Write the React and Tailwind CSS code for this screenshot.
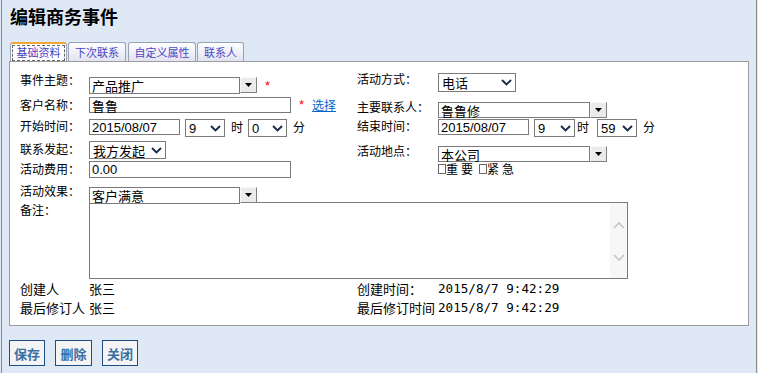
import React from "react";

const CJK = "font-['Noto_Sans_CJK_SC',sans-serif]";
const LAT = "font-['Liberation_Sans','Noto_Sans_CJK_SC',sans-serif]";
const MONO = "font-['DejaVu_Sans_Mono',monospace]";

function Chevron() {
  return (
    <svg width="11" height="7" viewBox="0 0 11 7">
      <polyline points="1,1 5.5,5.5 10,1" fill="none" stroke="#1b2a48" strokeWidth="1.9" />
    </svg>
  );
}

function Select({ className, text, font }) {
  return (
    <div
      className={`${className} ${font} border border-[#7a7a7a] bg-white flex items-center justify-between pl-[3px] pr-[3px] text-[13px] leading-[13px] text-black`}
    >
      <span>{text}</span>
      <Chevron />
    </div>
  );
}

function Input({ className, text, font }) {
  return (
    <div
      className={`${className} ${font} border border-[#7a7a7a] bg-white flex items-center pl-[2px] text-[13px] leading-[13px] text-black whitespace-nowrap`}
    >
      {text}
    </div>
  );
}

function DropBtn() {
  return (
    <div className="w-[17px] h-[16px] bg-[#ebebeb] border-t border-l border-t-[#f8f8f8] border-l-[#f8f8f8] border-r border-b border-r-[#808080] border-b-[#808080] flex items-center justify-center">
      <svg width="7" height="4" viewBox="0 0 7 4">
        <polygon points="0,0 7,0 3.5,4" fill="#000" />
      </svg>
    </div>
  );
}

function Combo({ inputClass, text }) {
  return (
    <div className="flex items-start">
      <Input className={inputClass} text={text} font={CJK} />
      <DropBtn />
    </div>
  );
}

function Label({ children, className = "" }) {
  return (
    <div className={`${className} text-[12px] leading-[12px] text-black whitespace-nowrap`}>{children}</div>
  );
}

function Star({ className = "" }) {
  return <span className={`${className} ${LAT} text-[13px] leading-[13px] text-[#ff0000]`}>*</span>;
}

function Check() {
  return <div className="w-[8px] h-[10px] border border-[#6a6a6a] bg-white" />;
}

export default function App() {
  return (
    <div className={`w-[758px] h-[373px] bg-[#dfe9f5] overflow-hidden ${CJK}`}>
      <div className="ml-[1px] w-[756px] h-full border-x border-[#8a8a8a]">
        {/* title */}
        <div className="pt-[7px] pl-[8px] text-[18px] leading-[18px] font-bold text-black">编辑商务事件</div>

        {/* tabs */}
        <div className="mt-[17px] pl-[8px] flex items-end h-[19px] text-[11px] leading-[11px]">
          <div className="w-[57px] h-[19px] border-t-2 border-t-[#f0a830] border-x border-x-[#9aa3b5] rounded-t-[3px] bg-white px-[1px] pt-[1px] flex">
            <div className="flex-1 border border-dashed border-[#666] flex justify-center pt-[1px] text-[#4a3fc0]">
              基础资料
            </div>
          </div>
          <div className="ml-[1px] w-[58px] h-[19px] border border-b-0 border-[#9aa3b5] rounded-t-[3px] bg-linear-to-b from-white to-[#e2e2f2] flex justify-center pt-[4px] text-[#4848c4]">
            下次联系
          </div>
          <div className="ml-[2px] w-[68px] h-[19px] border border-b-0 border-[#9aa3b5] rounded-t-[3px] bg-linear-to-b from-white to-[#e2e2f2] flex justify-center pt-[4px] text-[#4848c4]">
            自定义属性
          </div>
          <div className="ml-[1px] w-[47px] h-[19px] border border-b-0 border-[#9aa3b5] rounded-t-[3px] bg-linear-to-b from-white to-[#e2e2f2] flex justify-center pt-[4px] text-[#4848c4]">
            联系人
          </div>
        </div>

        {/* panel */}
        <div className="ml-[7px] w-[740px] h-[265px] border border-[#9c9c9c] bg-white pl-[10px] pt-[11px]">
          {/* row 1 */}
          <div className="flex h-[24px]">
            <Label className="w-[69px] pt-[1px]">事件主题：</Label>
            <div className="w-[268px] pt-[4px] flex items-start">
              <Combo inputClass="w-[151px] h-[17px]" text="产品推广" />
              <Star className="ml-[8px] mt-[2px]" />
            </div>
            <Label className="w-[81px] pt-[0px]">活动方式：</Label>
            <div className="pt-[0px]">
              <Select className="w-[78px] h-[19px]" text="电话" font={CJK} />
            </div>
          </div>

          {/* row 2 */}
          <div className="flex h-[22px]">
            <Label className="w-[69px] pt-[2px]">客户名称：</Label>
            <div className="w-[268px] flex items-start">
              <Input className="w-[202px] h-[16px]" text="鲁鲁" font={CJK} />
              <Star className="ml-[8px] mt-[1px]" />
              <span className="ml-[8px] mt-[2px] text-[12px] leading-[12px] text-[#0066cc] underline">选择</span>
            </div>
            <Label className="w-[81px] pt-[4px]">主要联系人：</Label>
            <div className="pt-[5px]">
              <Combo inputClass="w-[152px] h-[16px]" text="鲁鲁修" />
            </div>
          </div>

          {/* row 3 */}
          <div className="flex h-[21px]">
            <Label className="w-[69px] pt-[1px]">开始时间：</Label>
            <div className="w-[268px] flex items-start">
              <Input className="w-[91px] h-[16px]" text="2015/08/07" font={LAT} />
              <Select className="ml-[5px] w-[40px] h-[18px]" text="9" font={LAT} />
              <span className="ml-[6px] mt-[2px] text-[12px] leading-[12px]">时</span>
              <Select className="ml-[5px] w-[39px] h-[18px]" text="0" font={LAT} />
              <span className="ml-[6px] mt-[2px] text-[12px] leading-[12px]">分</span>
            </div>
            <Label className="w-[81px] pt-[1px]">结束时间：</Label>
            <div className="flex items-start">
              <Input className="w-[91px] h-[16px]" text="2015/08/07" font={LAT} />
              <Select className="ml-[5px] w-[41px] h-[18px]" text="9" font={LAT} />
              <span className="ml-[2px] mt-[2px] text-[12px] leading-[12px]">时</span>
              <Select className="ml-[8px] w-[40px] h-[18px]" text="59" font={LAT} />
              <span className="ml-[6px] mt-[2px] text-[12px] leading-[12px]">分</span>
            </div>
          </div>

          {/* row 4 */}
          <div className="flex h-[20px]">
            <Label className="w-[69px] pt-[3px]">联系发起：</Label>
            <div className="w-[268px] pt-[1px]">
              <Select className="w-[77px] h-[18px]" text="我方发起" font={CJK} />
            </div>
            <Label className="w-[81px] pt-[5px]">活动地点：</Label>
            <div className="pt-[6px] flex flex-col">
              <Combo inputClass="w-[152px] h-[16px]" text="本公司" />
              <div className="mt-[1px] flex items-center h-[12px] text-[12px] leading-[12px]">
                <Check />
                <span className="tracking-[3px]">重要</span>
                <div className="ml-[3px]">
                  <Check />
                </div>
                <span className="tracking-[3px]">紧急</span>
              </div>
            </div>
          </div>

          {/* row 5 */}
          <div className="flex h-[25px]">
            <Label className="w-[69px] pt-[3px]">活动费用：</Label>
            <div className="w-[268px] pt-[1px]">
              <Input className="w-[202px] h-[17px]" text="0.00" font={LAT} />
            </div>
          </div>

          {/* row 6 */}
          <div className="flex h-[17px]">
            <Label className="w-[69px] pt-[0px]">活动效果：</Label>
            <div className="w-[268px] pt-[2px] relative z-10">
              <Combo inputClass="w-[151px] h-[17px]" text="客户满意" />
            </div>
          </div>

          {/* row 7 */}
          <div className="flex h-[78px]">
            <Label className="w-[69px] pt-[2px]">备注：</Label>
            <div className="w-[539px] h-[77px] border border-[#7a7a7a] bg-white flex justify-end">
              <div className="w-[17px] h-full bg-[#f7f7f7] flex flex-col items-center justify-between pt-[19px] pb-[17px]">
                <svg width="12" height="7" viewBox="0 0 12 7">
                  <polyline points="1,6 6,1 11,6" fill="none" stroke="#c4c4c4" strokeWidth="1.6" />
                </svg>
                <svg width="12" height="7" viewBox="0 0 12 7">
                  <polyline points="1,1 6,6 11,1" fill="none" stroke="#c4c4c4" strokeWidth="1.6" />
                </svg>
              </div>
            </div>
          </div>

          {/* row 8 */}
          <div className="flex h-[19px] text-[13px] leading-[13px]">
            <div className="w-[69px] pt-[2px] whitespace-nowrap">创建人</div>
            <div className="w-[268px] pt-[2px]">张三</div>
            <div className="w-[81px] pt-[2px] whitespace-nowrap">创建时间：</div>
            <div className={`pt-[2px] ${MONO} text-[12.6px]`}>2015/8/7 9:42:29</div>
          </div>

          {/* row 9 */}
          <div className="flex h-[19px] text-[13px] leading-[13px]">
            <div className="w-[69px] pt-[2px] whitespace-nowrap">最后修订人</div>
            <div className="w-[268px] pt-[2px]">张三</div>
            <div className="w-[81px] pt-[2px] whitespace-nowrap">最后修订时间</div>
            <div className={`pt-[2px] ${MONO} text-[12.6px]`}>2015/8/7 9:42:29</div>
          </div>
        </div>

        {/* buttons */}
        <div className="ml-[7px] mt-[14px] flex gap-[10px]">
          <div className="w-[36px] h-[26px] border border-[#1f4f80] bg-[#f4f4f4] flex items-center justify-center text-[13px] leading-[13px] font-bold text-[#3a6ea5]">
            保存
          </div>
          <div className="w-[37px] h-[26px] border border-[#1f4f80] bg-[#f4f4f4] flex items-center justify-center text-[13px] leading-[13px] font-bold text-[#3a6ea5]">
            删除
          </div>
          <div className="w-[36px] h-[26px] border border-[#1f4f80] bg-[#f4f4f4] flex items-center justify-center text-[13px] leading-[13px] font-bold text-[#3a6ea5]">
            关闭
          </div>
        </div>
      </div>
    </div>
  );
}
